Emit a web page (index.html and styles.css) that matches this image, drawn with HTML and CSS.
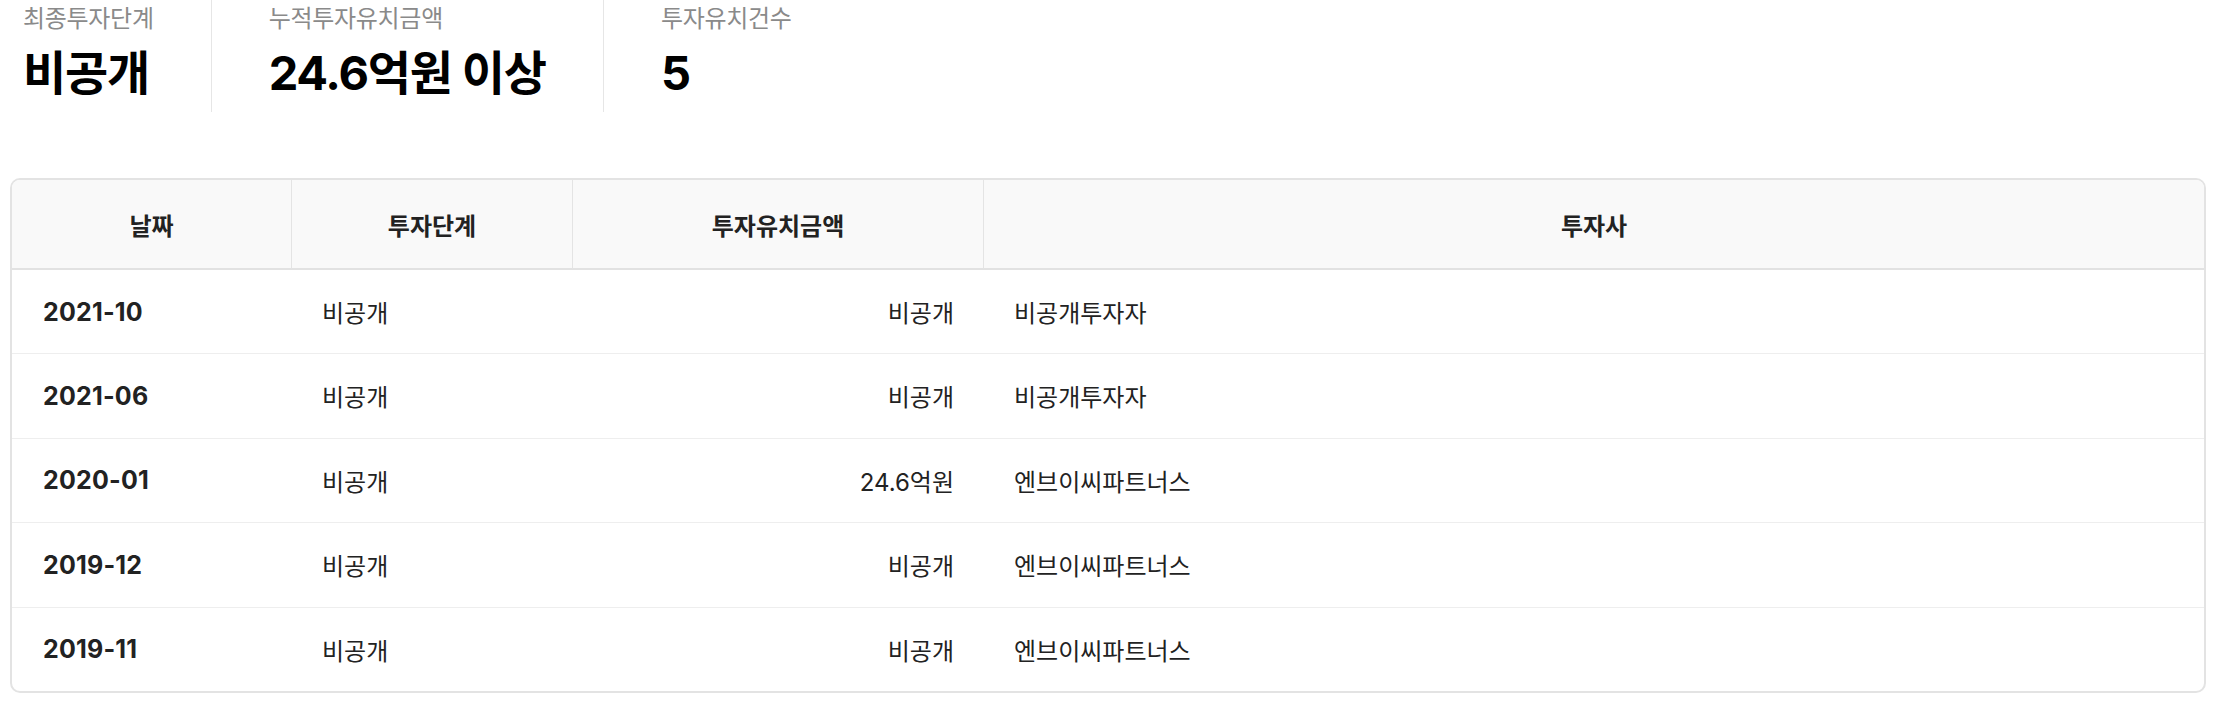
FILE: index.html
```html
<!DOCTYPE html>
<html lang="ko">
<head>
<meta charset="utf-8">
<title>투자유치 정보</title>
<link rel="stylesheet" href="styles.css">
</head>
<body>
<div class="page">
  <div class="stats">
    <div class="stat">
      <div class="stat-label">최종투자단계</div>
      <div class="stat-value">비공개</div>
    </div>
    <div class="stat">
      <div class="stat-label">누적투자유치금액</div>
      <div class="stat-value">24.6억원 이상</div>
    </div>
    <div class="stat">
      <div class="stat-label">투자유치건수</div>
      <div class="stat-value">5</div>
    </div>
  </div>

  <table class="invest">
    <colgroup>
      <col class="col-date">
      <col class="col-stage">
      <col class="col-amount">
      <col class="col-investor">
    </colgroup>
    <thead>
      <tr>
        <th>날짜</th>
        <th>투자단계</th>
        <th>투자유치금액</th>
        <th>투자사</th>
      </tr>
    </thead>
    <tbody>
      <tr>
        <td class="date">2021-10</td>
        <td>비공개</td>
        <td class="amount">비공개</td>
        <td>비공개투자자</td>
      </tr>
      <tr>
        <td class="date">2021-06</td>
        <td>비공개</td>
        <td class="amount">비공개</td>
        <td>비공개투자자</td>
      </tr>
      <tr>
        <td class="date">2020-01</td>
        <td>비공개</td>
        <td class="amount">24.6억원</td>
        <td>엔브이씨파트너스</td>
      </tr>
      <tr>
        <td class="date">2019-12</td>
        <td>비공개</td>
        <td class="amount">비공개</td>
        <td>엔브이씨파트너스</td>
      </tr>
      <tr>
        <td class="date">2019-11</td>
        <td>비공개</td>
        <td class="amount">비공개</td>
        <td>엔브이씨파트너스</td>
      </tr>
    </tbody>
  </table>
</div>
</body>
</html>
```

FILE: styles.css
```css
* {
  box-sizing: border-box;
}

body {
  margin: 0;
  background: #ffffff;
  font-family: Inter, "Noto Sans CJK KR", sans-serif;
  color: #222222;
}

.page {
  padding: 0 8px 0 10px;
}

.stats {
  display: flex;
  padding-left: 13px;
  margin-bottom: 66px;
}

.stat {
  padding: 0 57px;
  border-left: 1px solid #e6e6e6;
  height: 112px;
}

.stat:first-child {
  padding-left: 0;
  border-left: none;
}

.stat-label {
  font-size: 24px;
  line-height: 38px;
  color: #8a8a8a;
  letter-spacing: -0.3px;
}

.stat-value {
  margin-top: 6px;
  font-size: 47px;
  line-height: 58px;
  font-weight: 700;
  color: #000000;
  letter-spacing: -1.2px;
}

.invest {
  width: 100%;
  border-collapse: separate;
  border-spacing: 0;
  border: 2px solid #e3e3e3;
  border-radius: 10px;
  overflow: hidden;
  table-layout: fixed;
}

.col-date { width: 280px; }
.col-stage { width: 281px; }
.col-amount { width: 411px; }

.invest th {
  height: 90px;
  background: #f9f9f9;
  font-size: 24px;
  font-weight: 700;
  color: #222222;
  text-align: center;
  border-bottom: 2px solid #e2e2e2;
  border-right: 1px solid #e4e4e4;
  padding: 0 30px;
}

.invest th:last-child {
  border-right: none;
}

.invest td {
  height: 84.5px;
  font-size: 24px;
  color: #222222;
  padding: 0 30px;
  border-top: 1px solid #eeeeee;
  vertical-align: middle;
}

.invest tbody tr:first-child td {
  border-top: none;
  height: 83px;
}

.invest td.date {
  font-weight: 700;
  padding-left: 31px;
  font-size: 25px;
  letter-spacing: 0.2px;
}

.invest td.amount {
  text-align: right;
}
```
